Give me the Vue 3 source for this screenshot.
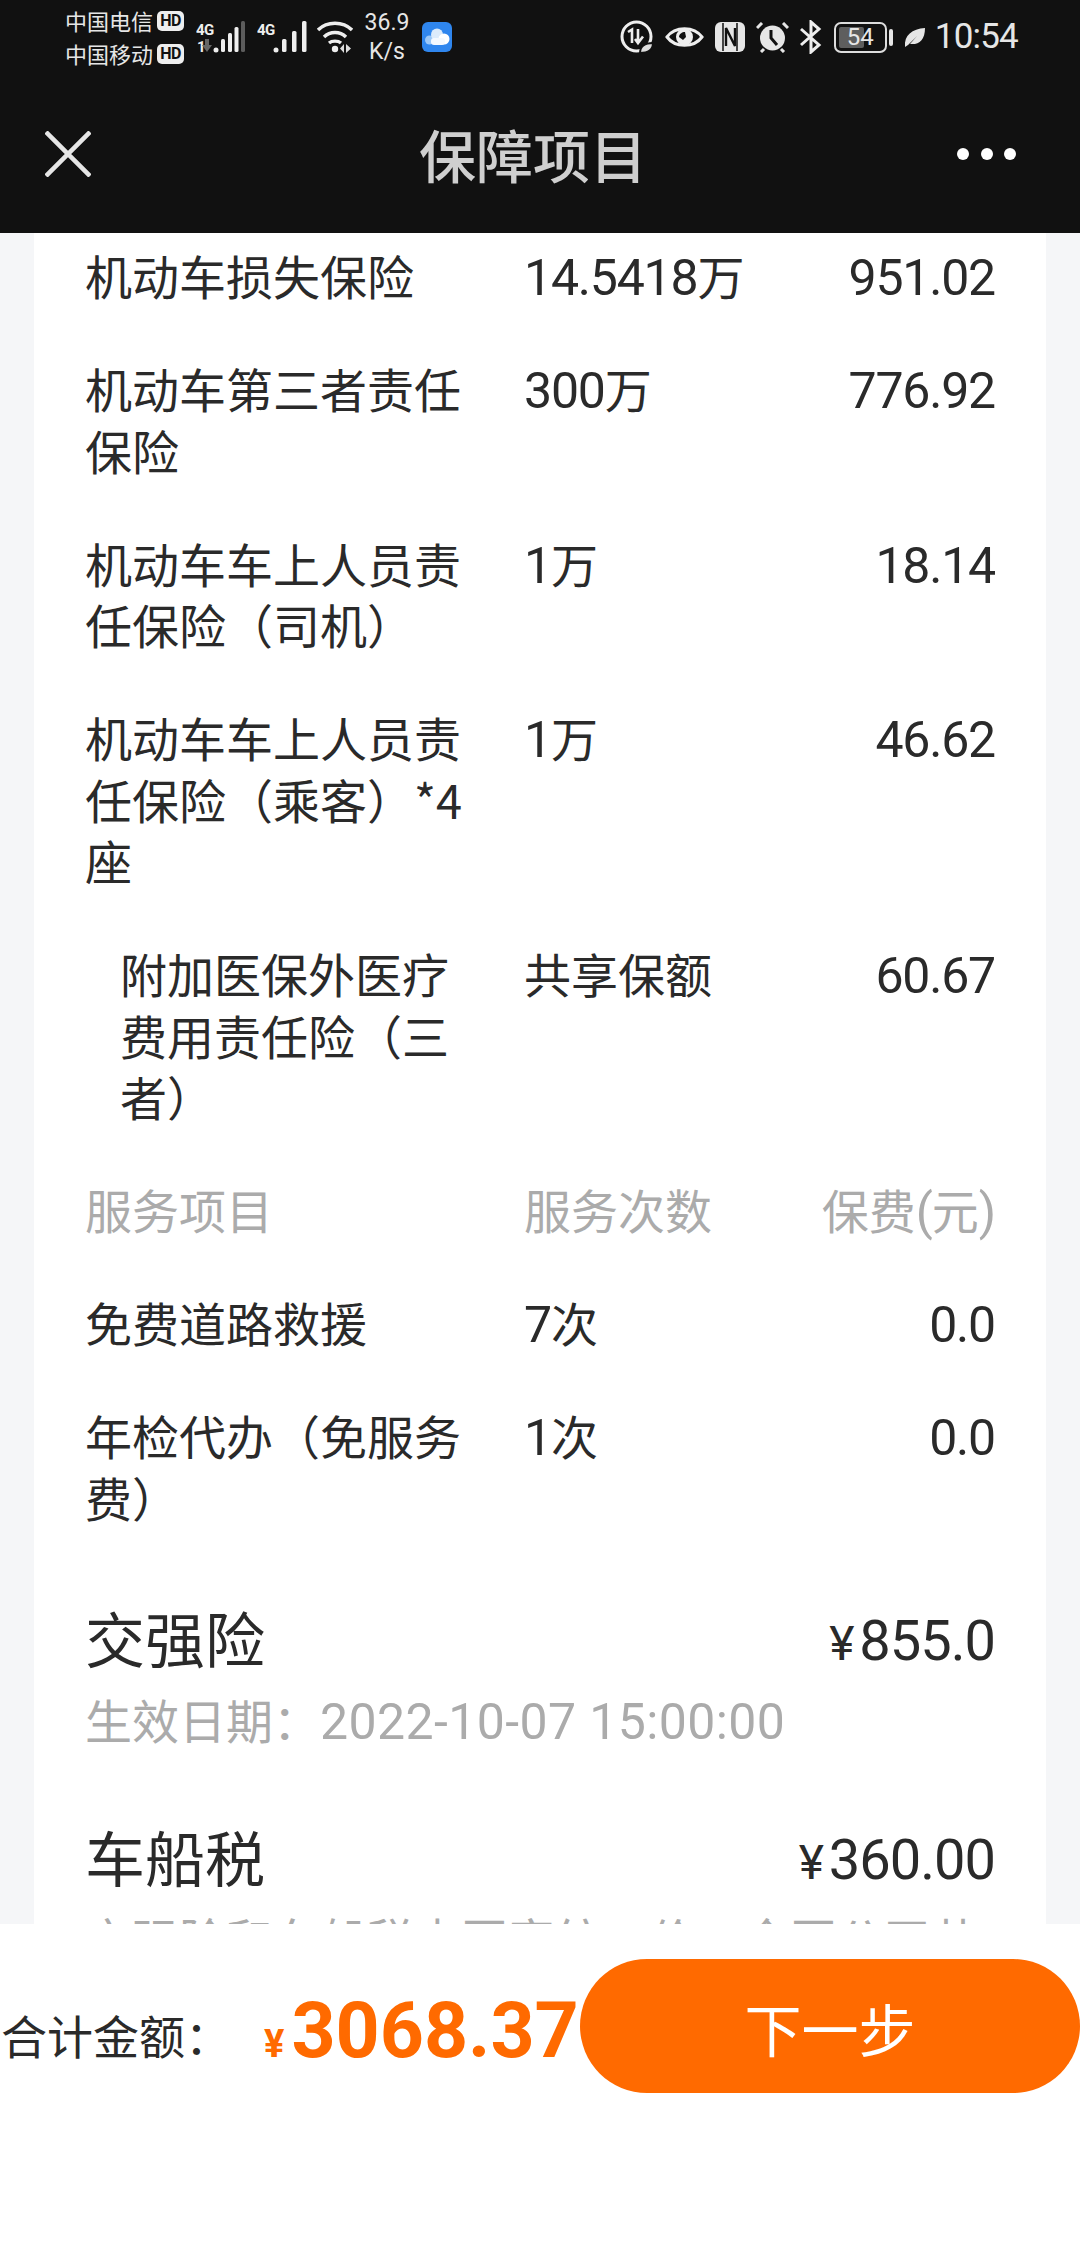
<script setup>
const rows = [
  { name: '机动车损失保险', amt: '14.5418', unit: '万', fee: '951.02' },
  { name: '机动车第三者责任保险', amt: '300', unit: '万', fee: '776.92' },
  { name: '机动车车上人员责任保险（司机）', amt: '1', unit: '万', fee: '18.14' },
  { name: '机动车车上人员责任保险（乘客）*4座', amt: '1', unit: '万', fee: '46.62' },
  { name: '附加医保外医疗费用责任险（三者）', amt: '', unit: '共享保额', fee: '60.67', sub: true },
]
const services = [
  { name: '免费道路救援', amt: '7', unit: '次', fee: '0.0' },
  { name: '年检代办（免服务费）', amt: '1', unit: '次', fee: '0.0' },
]
</script>

<template>
  <div class="page">
    <header class="top">
      <div class="status">
        <div class="carriers">
          <div class="carrier"><span>中国电信</span><b class="hd">HD</b></div>
          <div class="carrier"><span>中国移动</span><b class="hd">HD</b></div>
        </div>
        <svg class="ic sig1" viewBox="0 0 49 34" width="49" height="34">
          <text x="0" y="15" class="tiny">4G</text>
          <text x="1" y="32" class="tiny">1</text>
          <path d="M9 19h4v6h3l-5 7-5-7h3z" fill="#666"/>
          <circle cx="20" cy="30" r="2.500" fill="#eee"/>
          <rect x="25" y="19" width="4" height="13" rx="1.500" fill="#eee"/>
          <rect x="32" y="13" width="4" height="19" rx="1.500" fill="#eee"/>
          <rect x="38.500" y="7" width="4" height="25" rx="1.500" fill="#eee"/>
          <rect x="45" y="1" width="4" height="31" rx="1.500" fill="#5c5c5c"/>
        </svg>
        <svg class="ic sig2" viewBox="0 0 50 34" width="50" height="34">
          <text x="0" y="15" class="tiny">4G</text>
          <circle cx="19" cy="30" r="2.500" fill="#eee"/>
          <rect x="25" y="19" width="4.500" height="13" rx="1.500" fill="#eee"/>
          <rect x="35" y="11" width="4.500" height="21" rx="1.500" fill="#eee"/>
          <rect x="45" y="1" width="4.500" height="31" rx="1.500" fill="#eee"/>
        </svg>
        <svg class="ic wifi" viewBox="0 0 36 34" width="36" height="34">
          <path d="M1 10C10 1 26 1 35 10M7 17C13 11 23 11 29 17M12 23C15 20.500 21 20.500 24 23" fill="none" stroke="#eee" stroke-width="3.400"/>
          <circle cx="18" cy="29" r="3.200" fill="#eee"/>
          <path d="M27 24v9l-4-4.500zM29 24v9l5-4.500z" fill="#ddd"/>
        </svg>
        <div class="speed"><span>36.9</span><span>K/s</span></div>
        <svg class="ic cloud" viewBox="0 0 30 30" width="30" height="30">
          <rect width="30" height="30" rx="6" fill="#2f86ee"/>
          <circle cx="7.500" cy="18" r="4.500" fill="#9cc8f7"/>
          <circle cx="15" cy="12.500" r="6" fill="#dcebfb"/>
          <circle cx="22" cy="17" r="5.500" fill="#fff"/>
          <rect x="9" y="16" width="14" height="7" rx="3" fill="#f4f9ff"/>
        </svg>
        <div class="spacer"></div>
        <svg class="ic traffic" viewBox="0 0 34 34" width="34" height="34">
          <circle cx="16.500" cy="16.500" r="14.500" fill="none" stroke="#eee" stroke-width="3"/>
          <path d="M8 12l4-2.500V23M18 9v14M23 16.500l-5 6.500-3-4" fill="none" stroke="#eee" stroke-width="2.600"/>
          <path d="M20 33c0-7 5-10 13-10 0 7-5 10-13 10z" fill="#ddd" stroke="#111" stroke-width="2"/>
        </svg>
        <svg class="ic eye" viewBox="0 0 39 26" width="39" height="26">
          <path d="M2 13C10 2 29 2 37 13 29 24 10 24 2 13z" fill="none" stroke="#eee" stroke-width="3"/>
          <circle cx="19.500" cy="13" r="8.500" fill="#eee"/>
          <path d="M14 13c0-3 3-5 6-5l1 5-3 3z" fill="#111"/>
        </svg>
        <svg class="ic nfc" viewBox="0 0 30 30" width="30" height="30">
          <rect width="30" height="30" rx="6" fill="#e6e6e6"/>
          <path d="M8 1v28M22 1v28" stroke="#111" stroke-width="1.500"/>
          <path d="M11 24V6l9 18V6" fill="none" stroke="#111" stroke-width="2.400"/>
        </svg>
        <svg class="ic alarm" viewBox="0 0 33 31" width="33" height="31">
          <circle cx="16.500" cy="16" r="12.500" fill="#e6e6e6"/>
          <path d="M15 8v8l6 7" fill="none" stroke="#111" stroke-width="3"/>
          <path d="M1 6l5-5M32 6l-5-5M5 30l3-3M28 30l-3-3" stroke="#e6e6e6" stroke-width="3"/>
        </svg>
        <svg class="ic bt" viewBox="0 0 23 34" width="23" height="34">
          <path d="M2 9l18 16-8 7V2l8 7L2 25" fill="none" stroke="#eee" stroke-width="3"/>
        </svg>
        <div class="battery"><i class="level"></i><span>54</span></div>
        <i class="cap"></i>
        <svg class="ic leaf" viewBox="0 0 21 21" width="21" height="21">
          <path d="M1 20C0 8 8 2 21 1c0 12-6 17-15 16l7-8-9 9z" fill="#e6e6e6"/>
        </svg>
        <div class="clock">10:54</div>
      </div>
      <nav class="nav">
        <svg class="close" viewBox="0 0 46 46" width="46" height="46">
          <path d="M1 1l44 44M45 1L1 45" stroke="#e6e6e6" stroke-width="4.500" fill="none"/>
        </svg>
        <h1>保障项目</h1>
        <div class="dots"><i></i><i></i><i></i></div>
      </nav>
    </header>

    <main class="scroll">
      <section class="card">
        <div class="table">
          <div v-for="r in rows" :key="r.name" class="row">
            <div class="name" :class="{ sub: r.sub }">{{ r.name }}</div>
            <div class="amt"><span class="num">{{ r.amt }}</span>{{ r.unit }}</div>
            <div class="fee"><span class="num">{{ r.fee }}</span></div>
          </div>
          <div class="row head">
            <div class="name">服务项目</div>
            <div class="amt">服务次数</div>
            <div class="fee">保费<span class="num">(</span>元<span class="num">)</span></div>
          </div>
          <div v-for="s in services" :key="s.name" class="row">
            <div class="name">{{ s.name }}</div>
            <div class="amt"><span class="num">{{ s.amt }}</span>{{ s.unit }}</div>
            <div class="fee"><span class="num">{{ s.fee }}</span></div>
          </div>
        </div>
        <div class="block first">
          <div class="line">
            <h2>交强险</h2>
            <div class="price"><small>¥</small>855.0</div>
          </div>
          <p class="note">生效日期：<span class="date">2022-10-07 15:00:00</span></p>
        </div>
        <div class="block">
          <div class="line">
            <h2>车船税</h2>
            <div class="price"><small>¥</small>360.00</div>
          </div>
          <p class="note">交强险和车船税由国家统一价，全国公司共享同一标准</p>
        </div>
      </section>
    </main>

    <footer class="bar">
      <div class="total">
        <span class="label">合计金额：</span>
        <span class="amount"><span class="yen">¥</span><span class="sum">3068.37</span></span>
      </div>
      <button class="next">下一步</button>
    </footer>
  </div>
</template>

<style scoped>
.page {
  width: 1080px;
  height: 2244px;
  display: flex;
  flex-direction: column;
  overflow: hidden;
  background: #fff;
  font-family: "Noto Sans CJK SC", sans-serif;
  color: #2a2a2a;
}
.top { height: 233px; background: #111; flex: none; color: #e6e6e6; }
.status {
  height: 74px;
  padding: 0 62px 0 65px;
  display: flex;
  align-items: center;
  box-sizing: border-box;
}
.ic { flex: none; }
.carriers { width: 119px; margin-right: 12px; font-size: 22px; line-height: 33px; flex: none; }
.carrier { display: flex; align-items: center; justify-content: space-between; white-space: nowrap; }
.hd {
  width: 27px; height: 20px; background: #eee; color: #111; border-radius: 5px; text-align: center;
  font: 700 16px/20px Roboto, sans-serif; letter-spacing: -0.5px;
}
.tiny { font: 700 15px Roboto, sans-serif; fill: #eee; letter-spacing: -0.5px; }
.sig1 { margin-right: 12px; }
.sig2 { margin-right: 10px; }
.wifi { margin-right: 12px; }
.speed {
  width: 44px; margin-right: 13px; display: flex; flex-direction: column; align-items: center;
  font: 23px/29px Roboto, sans-serif; white-space: nowrap;
}
.spacer { flex: 1; }
.traffic, .eye, .nfc { margin-right: 11px; }
.alarm { margin-right: 10px; }
.bt { margin-right: 12px; }
.battery {
  width: 53px; height: 31px; border: 2.500px solid #ddd; border-radius: 7px; position: relative; box-sizing: border-box;
  font: 24px/26px Roboto, sans-serif; text-align: center;
}
.level { position: absolute; left: 3px; top: 3px; bottom: 3px; width: 25px; background: #5e5e5e; border-radius: 2px; }
.battery span { position: relative; }
.cap { width: 4px; height: 17px; background: #e6e6e6; border-radius: 2px; margin: 0 11px 0 2px; flex: none; }
.leaf { margin-right: 10px; }
.clock { font: 35px/40px Roboto, sans-serif; letter-spacing: -0.800px; }
.nav {
  height: 159px;
  padding: 0 64px 0 45px;
  display: flex;
  align-items: center;
  justify-content: space-between;
  position: relative;
}
.nav h1 {
  position: absolute;
  left: 0; right: 14px; top: 47px;
  text-align: center;
  margin: 0;
  font-size: 57px;
  line-height: 64px;
  font-weight: 500;
  color: #cfcfcf;
}
.dots { display: flex; gap: 11.500px; }
.dots i { width: 12px; height: 12px; border-radius: 50%; background: #fff; }
.scroll {
  flex: 1;
  min-height: 0;
  background: #f5f6f8;
  padding: 0 34px;
  overflow: hidden;
}
.card { background: #fff; padding: 0 51px; height: 100%; overflow: hidden; }
.row {
  display: flex;
  font-size: 47px;
  line-height: 61.500px;
  padding-bottom: 51.500px;
  color: #2a2a2a;
}
.table { padding-top: 11px; }
.name { width: 386px; margin-right: 53px; flex: none; }
.name.sub { padding-left: 35px; width: 351px; }
.amt { flex: 1; white-space: nowrap; }
.fee { text-align: right; white-space: nowrap; }
.num { font-family: Roboto, sans-serif; font-size: 50px; letter-spacing: -1.200px; line-height: 0; }
.head .name, .head .amt, .head .fee { color: #ababab; }
.block.first { margin-top: 13px; }
.block { margin-bottom: 61px; }
.line { display: flex; justify-content: space-between; align-items: center; }
.line h2 { margin: 0; font-size: 60px; line-height: 78px; font-weight: 400; }
.price { font: 56px/78px Roboto, sans-serif; letter-spacing: -1px; padding-top: 10px; }
.price small { font-size: 48px; font-weight: 400; margin-right: 6px; }
.note { margin: 5px 0 0; font-size: 47px; line-height: 62px; height: 62px; overflow: hidden; color: #ababab; }
.date { font-family: Roboto, sans-serif; font-size: 50px; letter-spacing: 0.400px; line-height: 0; white-space: nowrap; }
.bar {
  flex: none;
  height: 320px;
  background: #fff;
  display: flex;
  align-items: flex-start;
  box-sizing: border-box;
  padding-top: 35px;
  position: relative;
}
.total { display: flex; align-items: center; width: 580px; margin-top: 33px; white-space: nowrap; }
.label { font-size: 46px; width: 264px; padding: 0 0 8px 1px; box-sizing: border-box; flex: none; }
.amount { display: flex; align-items: baseline; font-family: Roboto, sans-serif; font-weight: 700; color: #ff6a00; line-height: 78px; }
.yen { font-size: 38px; margin-right: 7px; }
.sum { font-size: 77px; }
.next {
  width: 500px;
  height: 134px;
  border: 0;
  border-radius: 67px;
  background: #ff6a00;
  color: #fff;
  padding: 2px 0 0;
  font: 400 57px "Noto Sans CJK SC", sans-serif;
}
</style>
